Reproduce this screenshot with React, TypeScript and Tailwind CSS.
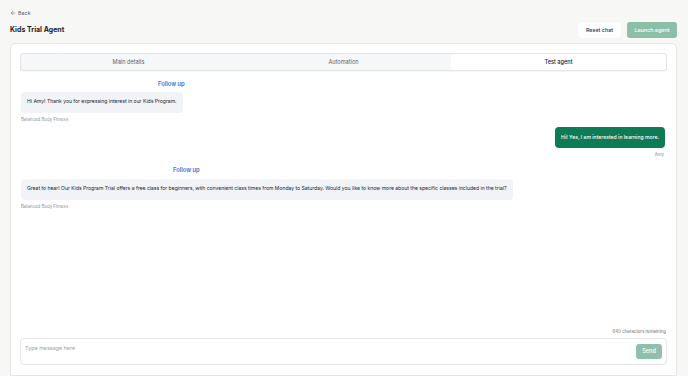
import { ArrowLeft } from 'lucide-react';

function AgentBubble({ text }: { text: string }) {
  return (
    <div className="flex flex-col items-start">
      <div className="bg-[#f1f3f7] rounded-[4px] px-[6px] h-[21px] flex items-center text-[5.1px] tracking-[-0.005em] text-[#23272e]">
        {text}
      </div>
      <div className="mt-[4px] text-[4.4px] text-[#8a8f98]">Balanced Body Fitness</div>
    </div>
  );
}

function FollowUp({ offset }: { offset: string }) {
  return <div className={`text-[5.8px] font-semibold text-[#3f6fdc] ${offset}`}>Follow up</div>;
}

export default function App() {
  return (
    <div className="h-[376px] w-[688px] overflow-hidden bg-[#f7f7f5] font-['Inter',sans-serif] flex flex-col pl-[10px] pr-[11px] pt-[9px]">
      <div className="flex items-center gap-[2px] text-[5.4px] text-[#555a61] h-[8px]">
        <ArrowLeft className="w-[6px] h-[6px]" strokeWidth={2} />
        <span>Back</span>
      </div>

      <div className="flex items-center justify-between mt-[5px] h-[16px]">
        <h1 className="text-[7px] font-bold text-[#1d2127]">Kids Trial Agent</h1>
        <div className="flex items-center gap-[6px]">
          <button className="h-[16px] w-[43px] rounded-[3px] bg-white text-[5.4px] font-medium text-[#2b2f36] shadow-[0_0_1px_rgba(0,0,0,0.12)]">
            Reset chat
          </button>
          <button className="h-[16px] w-[50px] rounded-[3px] bg-[#8dbfa8] text-[5.4px] font-medium text-white">
            Launch agent
          </button>
        </div>
      </div>

      <div className="flex-1 mt-[5px] bg-white border border-[#e6e6e3] rounded-t-[5px] px-[9px] pt-[9px] flex flex-col">
        <div className="h-[18px] grid grid-cols-3 border border-[#e3e5e8] rounded-[3px] bg-[#f6f7f9] text-[5.6px] text-[#5c6169] shadow-[0_1px_1px_rgba(0,0,0,0.04)]">
          <div className="flex items-center justify-center">Main details</div>
          <div className="flex items-center justify-center">Automation</div>
          <div className="flex items-center justify-center bg-white rounded-[3px] font-medium text-[#1d2127]">Test agent</div>
        </div>

        <div className="flex-1 flex flex-col px-[1px]">
          <div className="mt-[9px]">
            <FollowUp offset="ml-[137px]" />
          </div>
          <div className="mt-[3px]">
            <AgentBubble text="Hi Amy! Thank you for expressing interest in our Kids Program." />
          </div>

          <div className="flex flex-col items-end mt-[4px] pr-[1px]">
            <div className="bg-[#0e7b56] rounded-[4px] px-[6px] h-[21px] flex items-center text-[5.1px] font-medium text-white">
              Hi! Yes, I am interested in learning more.
            </div>
            <div className="mt-[4px] text-[4.4px] text-[#8a8f98] pr-[1px]">Amy</div>
          </div>

          <div className="mt-[7px]">
            <FollowUp offset="ml-[152px]" />
          </div>
          <div className="mt-[4px]">
            <AgentBubble text="Great to hear! Our Kids Program Trial offers a free class for beginners, with convenient class times from Monday to Saturday. Would you like to know more about the specific classes included in the trial?" />
          </div>
        </div>

        <div className="text-right text-[4.4px] text-[#6b7079] pr-[1px] mb-[2px]">640 characters remaining</div>
        <div className="h-[27px] mb-[10px] border border-[#e3e5e8] rounded-[4px] flex items-start justify-between pl-[4px] pr-[4px] pt-[5px]">
          <span className="text-[5.4px] text-[#9a9fa7]">Type message here</span>
          <button className="h-[15px] w-[26px] rounded-[3px] bg-[#8fc0ab] text-[5.6px] font-medium text-white">Send</button>
        </div>
      </div>
    </div>
  );
}
